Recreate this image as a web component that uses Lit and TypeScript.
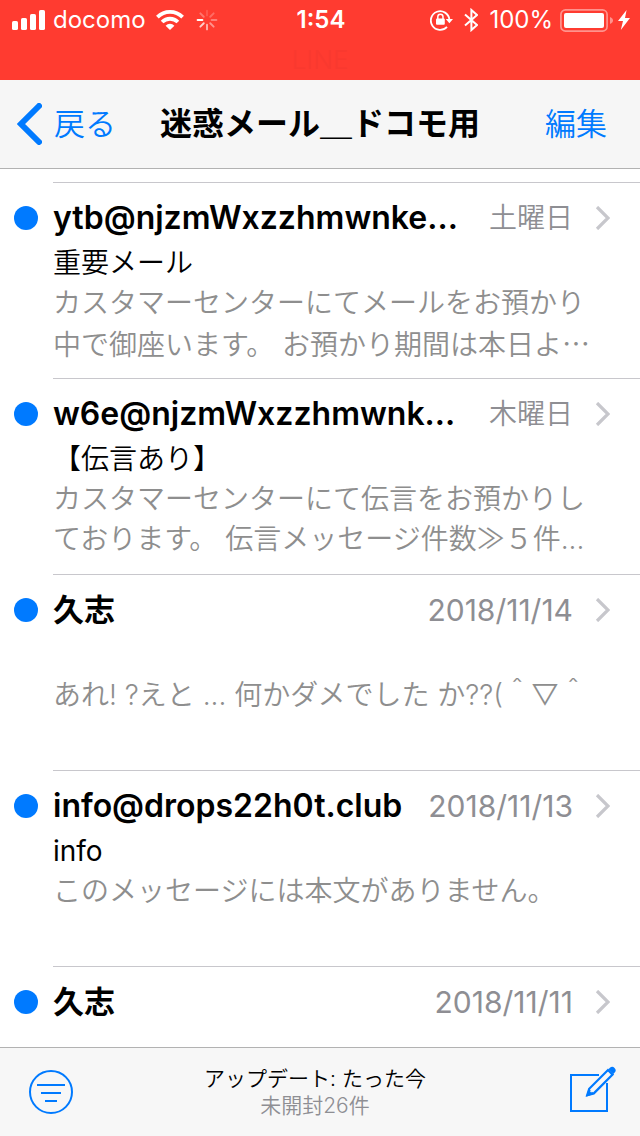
import { LitElement, html, css, svg, nothing } from "lit";
import { customElement, property } from "lit/decorators.js";

interface Message {
  sender: string;
  date: string;
  subject: string;
  preview: string[];
  wideEllipsis?: boolean;
}

const MESSAGES: Message[] = [
  {
    sender: "ytb@njzmWxzzhmwnke...",
    date: "土曜日",
    subject: "重要メール",
    preview: ["カスタマーセンターにてメールをお預かり", "中で御座います。 お預かり期間は本日よ"],
    wideEllipsis: true,
  },
  {
    sender: "w6e@njzmWxzzhmwnk...",
    date: "木曜日",
    subject: "【伝言あり】",
    preview: ["カスタマーセンターにて伝言をお預かりし", "ております。 伝言メッセージ件数≫５件..."],
  },
  {
    sender: "久志",
    date: "2018/11/14",
    subject: "",
    preview: ["あれ! ?えと ... 何かダメでした か??(＾▽＾"],
  },
  {
    sender: "info@drops22h0t.club",
    date: "2018/11/13",
    subject: "info",
    preview: ["このメッセージには本文がありません。"],
  },
  { sender: "久志", date: "2018/11/11", subject: "", preview: [] },
];

@customElement("status-bar")
export class StatusBar extends LitElement {
  static styles = css`
    :host {
      display: block;
      flex: none;
      background: #ff3b30;
      color: #fff;
    }
    .bar {
      display: grid;
      grid-template-columns: 1fr auto 1fr;
      align-items: center;
      height: 40px;
      padding: 0 10px 0 12px;
      font-size: 24px;
      line-height: 40px;
    }
    .side {
      display: flex;
      align-items: center;
    }
    .right {
      justify-content: flex-end;
    }
    .carrier {
      margin: 0 10px 0 8px;
    }
    .spinner {
      margin-left: 12px;
    }
    .time {
      font-weight: 600;
    }
    .bluetooth {
      margin: 0 11px;
    }
    .battery {
      margin: 0 5px 0 7px;
    }
    .app {
      height: 40px;
      line-height: 40px;
      font-size: 26px;
      font-weight: 300;
      text-align: center;
      color: #f9392f;
    }
    svg {
      display: block;
      flex: none;
    }
  `;

  render() {
    const spokes = [0.15, 0.25, 0.35, 0.45, 0.6, 0.75, 1, 0.3];
    return html`
      <div class="bar">
        <div class="side">
          <svg width="33" height="20" viewBox="0 0 33 20" fill="#fff">
            <rect y="11" width="6" height="9" rx="1.6" />
            <rect x="9" y="8" width="6" height="12" rx="1.6" />
            <rect x="18" y="4" width="6" height="16" rx="1.6" />
            <rect x="27" width="6" height="20" rx="1.6" />
          </svg>
          <span class="carrier">docomo</span>
          <svg width="28" height="20" viewBox="0 0 28 20">
            <g fill="none" stroke="#fff" stroke-width="3.8">
              <path d="M1.400 7.200a17.800 17.800 0 0 1 25.200 0" />
              <path d="M6.100 12a11.200 11.200 0 0 1 15.800 0" />
            </g>
            <path d="M14 20l-4.400-4.300a6.200 6.200 0 0 1 8.800 0z" fill="#fff" />
          </svg>
          <svg class="spinner" width="22" height="22" viewBox="-11 -11 22 22">
            ${spokes.map(
              (o, i) => svg`<path d="M0-4.6V-9.4" stroke="#fff" stroke-width="1.9" stroke-linecap="round"
                stroke-opacity=${o} transform="rotate(${i * 45})" />`
            )}
          </svg>
        </div>
        <span class="time">1:54</span>
        <div class="side right">
          <svg width="23" height="22" viewBox="0 0 23 22">
            <path d="M17 17.800A9.300 9.300 0 1 1 19.400 10.500" fill="none" stroke="#fff" stroke-width="1.8" />
            <path d="M15.800 10h7.200l-3.600 4.200z" fill="#fff" />
            <rect x="6" y="9.400" width="8.800" height="6.400" rx="1" fill="#fff" />
            <path d="M7.800 10V7.800a2.600 2.600 0 0 1 5.200 0V10" fill="none" stroke="#fff" stroke-width="1.500" />
          </svg>
          <svg class="bluetooth" width="14" height="24" viewBox="0 0 14 24">
            <path d="M1 6.400l12 10.600-5.600 5V2l5.600 5L1 17.600" fill="none" stroke="#fff" stroke-width="2" />
          </svg>
          <span>100%</span>
          <svg class="battery" width="53" height="23" viewBox="0 0 53 23">
            <rect x=".9" y=".9" width="46.2" height="21.2" rx="4.6" fill="none" stroke="#fff" stroke-opacity=".45" stroke-width="1.7" />
            <rect x="4" y="4" width="40" height="15" rx="2" fill="#fff" />
            <path d="M50 8c4 1.400 4 5.600 0 7z" fill="#fff" fill-opacity=".45" />
          </svg>
          <svg width="12" height="20" viewBox="0 0 12 20">
            <path d="M8.600 0L0 11h5L2.800 20 12 8H7z" fill="#fff" />
          </svg>
        </div>
      </div>
      <div class="app">LINE</div>
    `;
  }
}

@customElement("mail-row")
export class MailRow extends LitElement {
  @property({ attribute: false }) message!: Message;

  static styles = css`
    :host {
      display: block;
    }
    .row {
      display: grid;
      grid-template-columns: 53px 1fr;
      color: #000;
      text-decoration: none;
    }
    .dot {
      width: 24px;
      height: 24px;
      margin: 24px 0 0 14px;
      border-radius: 50%;
      background: #007aff;
    }
    .body {
      min-width: 0;
      min-height: 182px;
      padding: 13px 30px 0 0;
      border-top: 1px solid #c8c7cc;
      white-space: nowrap;
    }
    .head {
      display: flex;
      align-items: center;
      height: 44px;
      margin-bottom: 3px;
    }
    .sender {
      flex: 1;
      min-width: 0;
      font-size: 32px;
      font-weight: 600;
      line-height: 44px;
    }
    .sender.ja {
      font-size: 31px;
      font-weight: 700;
    }
    .date {
      margin-right: 22px;
      font-size: 30px;
      line-height: 44px;
      color: #8e8e93;
    }
    .date.ja {
      font-size: 28px;
      font-weight: 350;
    }
    .subject {
      height: 40px;
      font-size: 28px;
      line-height: 40px;
    }
    .subject.ja {
      font-weight: 350;
    }
    .preview {
      font-size: 28px;
      line-height: 40px;
      font-weight: 350;
      color: #8e8e8e;
    }
    .line {
      display: block;
    }
    .wide {
      font-family: "Noto Sans CJK JP", sans-serif;
    }
    svg {
      display: block;
      flex: none;
    }
  `;

  render() {
    const m = this.message;
    const ja = (s: string) => (/[^\x00-\x7f]/.test(s) ? "ja" : "");
    const last = m.preview.length - 1;
    return html`
      <a class="row" href="#">
        <span class="dot"></span>
        <div class="body">
          <div class="head">
            <span class="sender ${ja(m.sender)}">${m.sender}</span>
            <span class="date ${ja(m.date)}">${m.date}</span>
            <svg width="15" height="24" viewBox="0 0 15 24" fill="none">
              <path d="M2 1l11 11L2 23" stroke="#c7c7cc" stroke-width="3.2" />
            </svg>
          </div>
          <div class="subject ${ja(m.subject)}">${m.subject}</div>
          <div class="preview">
            ${m.preview.map(
              (line, i) =>
                html`<span class="line">${line}${m.wideEllipsis && i === last
                    ? html`<span class="wide">…</span>`
                    : nothing}</span>`
            )}
          </div>
        </div>
      </a>
    `;
  }
}

@customElement("app-root")
export class AppRoot extends LitElement {
  static styles = css`
    :host {
      display: flex;
      flex-direction: column;
      height: 100vh;
      overflow: hidden;
      background: #fff;
      color: #000;
      font-family: Inter, "Noto Sans CJK JP", sans-serif;
    }
    button {
      display: flex;
      align-items: center;
      padding: 0;
      border: 0;
      background: none;
      color: #007aff;
      font: inherit;
      font-weight: 350;
    }
    .nav {
      display: grid;
      grid-template-columns: 1fr auto 1fr;
      align-items: center;
      flex: none;
      height: 88px;
      padding: 0 17px;
      border-bottom: 1px solid #b2b2b2;
      background: #f6f6f6;
      font-size: 31px;
      line-height: 44px;
    }
    .back {
      gap: 12px;
    }
    .edit {
      justify-self: end;
      padding-right: 16px;
    }
    .title {
      margin: 0;
      font-size: 32px;
      line-height: 44px;
      font-weight: 700;
    }
    .list {
      flex: 1;
      min-height: 0;
      margin: 0;
      padding: 13px 0 0;
      overflow: hidden;
      list-style: none;
    }
    .toolbar {
      display: grid;
      grid-template-columns: 1fr auto 1fr;
      align-items: center;
      flex: none;
      height: 88px;
      padding: 0 24px 0 14px;
      border-top: 1px solid #b2b2b2;
      background: #f7f7f7;
    }
    .filter {
      padding-left: 14px;
    }
    .compose {
      justify-self: end;
    }
    .status {
      text-align: center;
      font-size: 21px;
      line-height: 27px;
      font-weight: 350;
    }
    .updated,
    .unread {
      margin: 0;
    }
    .unread {
      color: #8e8e93;
    }
    svg {
      display: block;
      flex: none;
    }
  `;

  render() {
    return html`
      <status-bar></status-bar>
      <header class="nav">
        <button class="back">
          <svg width="25" height="42" viewBox="0 0 25 42" fill="none">
            <path d="M22 3L4 21l18 18" stroke="#007aff" stroke-width="6" stroke-linecap="round" />
          </svg>
          戻る
        </button>
        <h1 class="title">迷惑メール＿ドコモ用</h1>
        <button class="edit">編集</button>
      </header>
      <ul class="list">
        ${MESSAGES.map((m) => html`<li><mail-row .message=${m}></mail-row></li>`)}
      </ul>
      <footer class="toolbar">
        <button class="filter" aria-label="フィルタ">
          <svg width="46" height="46" viewBox="0 0 46 46" fill="none" stroke="#007aff" stroke-width="2">
            <circle cx="23" cy="23" r="21" />
            <path d="M9 16h28M13 24h20M17 32h12" />
          </svg>
        </button>
        <div class="status">
          <p class="updated">アップデート: たった今</p>
          <p class="unread">未開封26件</p>
        </div>
        <button class="compose" aria-label="作成">
          <svg width="46" height="52" viewBox="0 0 46 52" fill="none" stroke="#007aff">
            <path d="M29 9H1v36h36V17" stroke-width="2" />
            <path d="M17.200 29.200l2-6.400L38 4l4.600 4.600L23.800 27.400z" stroke-width="2.200" />
            <path d="M18.600 22.500l5.600 5.300-8 2.900z" fill="#007aff" stroke="none" />
            <path d="M20.600 25.900l1-1" stroke="#f7f7f7" stroke-width="1.600" />
            <path d="M38.500 3.200l1.400-1.400a3.400 3.400 0 0 1 4.800 4.800L43.400 8z" fill="#007aff" stroke="none" />
          </svg>
        </button>
      </footer>
    `;
  }
}
